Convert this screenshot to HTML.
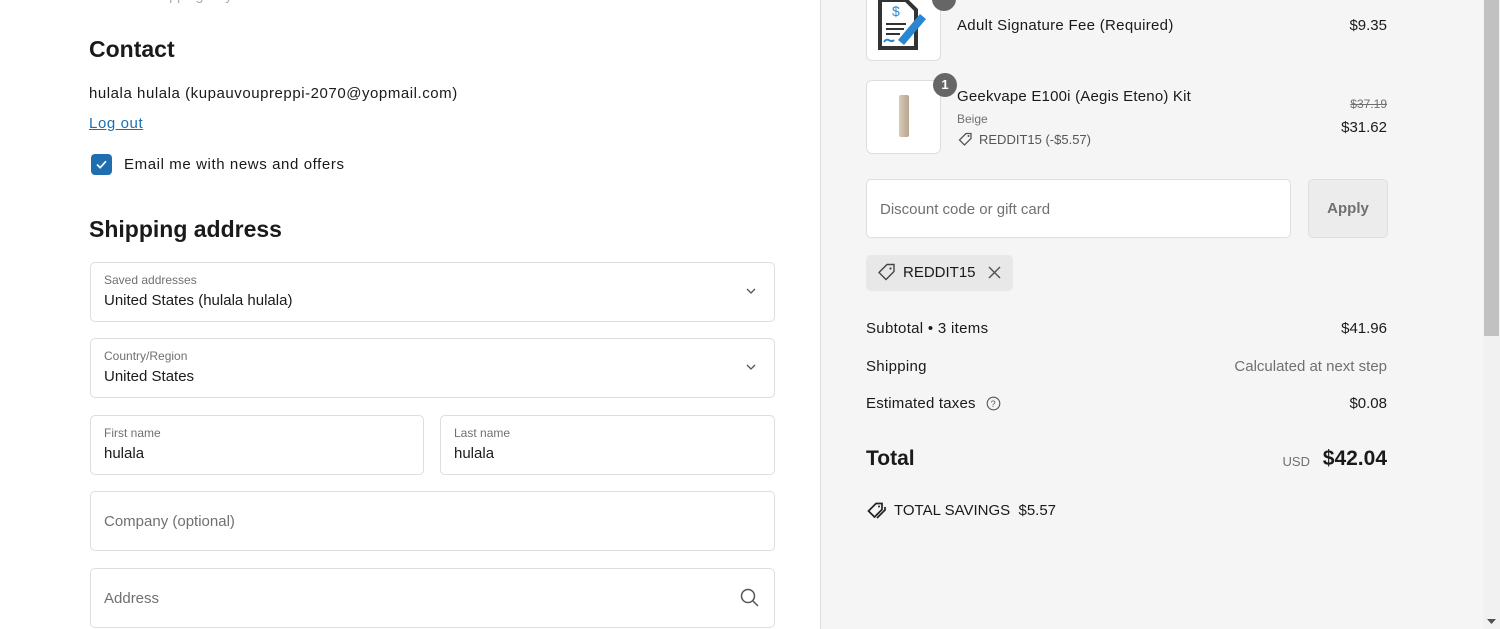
<!DOCTYPE html>
<html><head><meta charset="utf-8"><style>
*{box-sizing:border-box;margin:0;padding:0}
body{width:1500px;height:629px;overflow:hidden;background:#fff;font-family:"Liberation Sans",sans-serif;color:#1a1a1a;position:relative;font-size:14px}
.a{position:absolute;white-space:nowrap}
.right{position:absolute;left:820px;top:0;width:663px;height:629px;background:#f5f5f5;border-left:1px solid #dedede}
.sb{position:absolute;left:1483px;top:0;width:17px;height:629px;background:#f1f1f1}
.thumb{position:absolute;left:1484px;top:0;width:15px;height:336px;background:#c1c1c1}
.field{position:absolute;border:1px solid #dedede;border-radius:5px;background:#fff}
.lbl{position:absolute;left:13px;top:10px;font-size:12px;color:#707070}
.val{position:absolute;left:13px;top:29px;font-size:15px;color:#1a1a1a}
.ph{position:absolute;left:13px;top:21px;font-size:15px;color:#707070}
.chev{position:absolute;right:18px;top:24px;width:10px;height:8px}
.img{position:absolute;left:45px;width:75px;height:74px;border:1px solid #dedede;border-radius:6px;background:#fff}
.r{position:absolute;right:96px}
</style></head><body>
<div class="a" style="left:89px;top:-13px;font-size:14px;color:#aaa">Show the shipping way</div>
<div class="a" style="left:89px;top:36px;font-size:23px;font-weight:bold">Contact</div>
<div class="a" style="left:89px;top:85px;font-size:15px;letter-spacing:0.55px">hulala hulala (kupauvoupreppi-2070@yopmail.com)</div>
<div class="a" style="left:89px;top:115px;font-size:15px;letter-spacing:0.6px;color:#1f6fb0;text-decoration:underline">Log out</div>
<div class="a" style="left:91px;top:154px;width:21px;height:21px;background:#1f6fb0;border-radius:4px"><svg width="21" height="21"><path d="M6 10.5l3.2 3.2 5.8-6.5" fill="none" stroke="#fff" stroke-width="1.6"/></svg></div>
<div class="a" style="left:124px;top:156px;font-size:15px;letter-spacing:0.6px">Email me with news and offers</div>
<div class="a" style="left:89px;top:216px;font-size:23px;font-weight:bold">Shipping address</div>

<div class="field" style="left:90px;top:262px;width:685px;height:60px"><div class="lbl">Saved addresses</div><div class="val">United States (hulala hulala)</div><svg class="chev" viewBox="0 0 10 8"><path d="M1 2l4 4 4-4" fill="none" stroke="#555" stroke-width="1.3"/></svg></div>
<div class="field" style="left:90px;top:338px;width:685px;height:60px"><div class="lbl">Country/Region</div><div class="val">United States</div><svg class="chev" viewBox="0 0 10 8"><path d="M1 2l4 4 4-4" fill="none" stroke="#555" stroke-width="1.3"/></svg></div>
<div class="field" style="left:90px;top:415px;width:334px;height:60px"><div class="lbl">First name</div><div class="val">hulala</div></div>
<div class="field" style="left:440px;top:415px;width:335px;height:60px"><div class="lbl">Last name</div><div class="val">hulala</div></div>
<div class="field" style="left:90px;top:491px;width:685px;height:60px"><div class="ph">Company (optional)</div></div>
<div class="field" style="left:90px;top:568px;width:685px;height:60px"><div class="ph">Address</div><svg style="position:absolute;right:14px;top:19px" width="20" height="20"><circle cx="8" cy="8" r="6.5" fill="none" stroke="#555" stroke-width="1.5"/><path d="M13 13l5 5" stroke="#555" stroke-width="1.5"/></svg></div>

<div class="right">
 <div class="img" style="top:-13px;height:74px"><svg style="position:absolute;left:9px;top:8px" width="58" height="58" viewBox="0 0 58 58"><path d="M4 4h26l10 10v38H4z" fill="#fff" stroke="#333" stroke-width="4"/><text x="16" y="20" font-size="14" fill="#2a86d0" font-family="Liberation Sans">$</text><path d="M10 28h20M10 33h18M10 38h14" stroke="#333" stroke-width="2"/><path d="M22 44l22-26 6 5-22 26z" fill="#2a86d0"/><path d="M8 46c4-6 6 2 10-2" stroke="#2a86d0" stroke-width="2" fill="none"/></svg><div style="position:absolute;right:-16px;top:-1px;width:24px;height:24px;border-radius:50%;background:#666"></div></div>
 <div class="a" style="left:136px;top:17px;font-size:15px;letter-spacing:0.3px">Adult Signature Fee (Required)</div>
 <div class="a r" style="top:17px;font-size:15px">$9.35</div>

 <div class="img" style="top:80px;height:74px"><div style="position:absolute;left:32px;top:14px;width:10px;height:42px;background:linear-gradient(90deg,#d8cbb8,#b7a58d);border-radius:2px"></div><div style="position:absolute;right:-17px;top:-8px;width:24px;height:24px;border-radius:50%;background:#666;color:#fff;font-size:13px;font-weight:bold;text-align:center;line-height:24px">1</div></div>
 <div class="a" style="left:136px;top:88px;font-size:15px;letter-spacing:0.2px">Geekvape E100i (Aegis Eteno) Kit</div>
 <div class="a" style="left:136px;top:112px;font-size:12px;color:#707070">Beige</div>
 <svg class="a" style="left:137px;top:132px" width="15" height="15" viewBox="0 0 15 15"><path d="M8 1.5h5v5l-6.5 6.5-5-5z" fill="none" stroke="#555" stroke-width="1.3"/><circle cx="10.5" cy="4" r="1" fill="#555"/></svg>
 <div class="a" style="left:158px;top:132px;font-size:13px;color:#555">REDDIT15 (-$5.57)</div>
 <div class="a r" style="top:97px;font-size:12px;color:#707070;text-decoration:line-through">$37.19</div>
 <div class="a r" style="top:119px;font-size:15px">$31.62</div>

 <div class="field" style="left:45px;top:179px;width:425px;height:59px"><div class="ph" style="top:21px">Discount code or gift card</div></div>
 <div class="a" style="left:487px;top:179px;width:80px;height:59px;border:1px solid #dedede;border-radius:5px;background:#ececec;color:#707070;font-weight:bold;font-size:15px;text-align:center;line-height:57px">Apply</div>

 <div class="a" style="left:45px;top:255px;width:147px;height:36px;background:#e8e8e8;border-radius:5px"></div>
 <svg class="a" style="left:57px;top:263px" width="18" height="18" viewBox="0 0 18 18"><path d="M9 1.5h7v7l-8 8-7-7z" fill="none" stroke="#444" stroke-width="1.4"/><circle cx="12.5" cy="5.5" r="1.1" fill="#444"/></svg>
 <div class="a" style="left:82px;top:264px;font-size:15px">REDDIT15</div>
 <svg class="a" style="left:167px;top:266px" width="13" height="13"><path d="M1 1l11 11M12 1L1 12" stroke="#555" stroke-width="1.5"/></svg>

 <div class="a" style="left:45px;top:320px;font-size:15px;letter-spacing:0.3px">Subtotal • 3 items</div>
 <div class="a r" style="top:320px;font-size:15px">$41.96</div>
 <div class="a" style="left:45px;top:358px;font-size:15px;letter-spacing:0.3px">Shipping</div>
 <div class="a r" style="top:358px;font-size:15px;color:#707070">Calculated at next step</div>
 <div class="a" style="left:45px;top:395px;font-size:15px;letter-spacing:0.2px">Estimated taxes</div>
 <svg class="a" style="left:165px;top:396px" width="15" height="15"><circle cx="7.5" cy="7.5" r="6.3" fill="none" stroke="#555" stroke-width="1.1"/><text x="4.6" y="11" font-size="9" fill="#555" font-family="Liberation Sans">?</text></svg>
 <div class="a r" style="top:395px;font-size:15px">$0.08</div>
 <div class="a" style="left:45px;top:447px;font-size:21px;font-weight:bold">Total</div>
 <div class="a" style="right:173px;top:454px;font-size:13px;color:#707070">USD</div>
 <div class="a r" style="top:447px;font-size:21px;font-weight:bold">$42.04</div>
 <svg class="a" style="left:46px;top:502px" width="20" height="18" viewBox="0 0 20 18"><path d="M9 1.5h6v6l-7.5 7.5-6-6z" fill="none" stroke="#222" stroke-width="1.7"/><path d="M18 5v3l-8 8" fill="none" stroke="#222" stroke-width="1.7"/><circle cx="12" cy="4.5" r="1" fill="#222"/></svg>
 <div class="a" style="left:73px;top:502px;font-size:15px">TOTAL SAVINGS&nbsp; $5.57</div>
</div>
<div class="sb"></div><div class="thumb"></div>
<svg class="a" style="left:1487px;top:619px" width="9" height="6"><path d="M0 0h9L4.5 5z" fill="#505050"/></svg>
</body></html>
